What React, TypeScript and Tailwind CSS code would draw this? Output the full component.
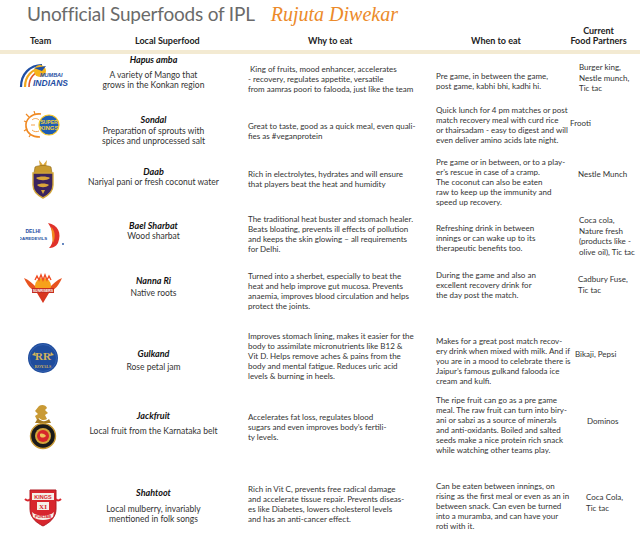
import React from "react";

type Row = {
  h: string;
  logo: React.ReactNode;
  logoPad: string;
  food: string;
  foodPad: string;
  descGap: string;
  desc: string[];
  whyPad: string;
  why: string[];
  whenPad: string;
  when: string[];
  partPad: string;
  part: string[];
};

const MiLogo = () => (
  <svg width="50" height="26" viewBox="0 0 50 26">
    <path d="M3 25 C3 12 12 3 24 3" stroke="#1f4fa3" strokeWidth="2.2" fill="none" />
    <path d="M7 25 C7 14 14 7 24 6" stroke="#f2a81d" strokeWidth="2.2" fill="none" />
    <path d="M11 25 C11 16 16 10 24 9" stroke="#e0582a" strokeWidth="1.6" fill="none" />
    <circle cx="22" cy="9" r="6" fill="#f6b51b" />
    <path d="M16 6 L28 4 L24 9 Z" fill="#1f4fa3" />
    <text x="22" y="15" fontSize="5.5" fontWeight="700" fontStyle="italic" fill="#1f4fa3" fontFamily="Liberation Sans">MUMBAI</text>
    <text x="15" y="23.5" fontSize="8.5" fontWeight="900" fontStyle="italic" fill="#1f4fa3" fontFamily="Liberation Sans">INDIANS</text>
  </svg>
);

const CskLogo = () => (
  <svg width="40" height="28" viewBox="0 0 40 28">
    <path d="M18 3 C8 2 2 9 3 16 C4 22 9 26 17 26" stroke="#f08a24" strokeWidth="1.6" fill="none" />
    <path d="M6 6 L3 3 M4 11 L1 10 M4 18 L1 20 M8 23 L6 26 M12 3 L11 0" stroke="#f08a24" strokeWidth="1.2" />
    <path d="M9 9 C11 7 14 7 16 9 M8 14 L12 14 M9 19 C11 21 14 21 16 20" stroke="#f4a24a" strokeWidth="1" fill="none" />
    <circle cx="26" cy="14" r="10" fill="#1d5cb4" stroke="#f4c62a" strokeWidth="1.2" />
    <text x="26" y="12.5" fontSize="5" fontWeight="700" fill="#f6d23a" textAnchor="middle" fontFamily="Liberation Sans">SUPER</text>
    <text x="26" y="19" fontSize="6" fontWeight="900" fill="#f6d23a" textAnchor="middle" fontFamily="Liberation Sans">KINGS</text>
  </svg>
);

const KkrLogo = () => (
  <svg width="28" height="40" viewBox="0 0 28 40">
    <path d="M10 1 L14 6 L18 1 L17 8 L11 8 Z" fill="#d9a63a" />
    <path d="M6 8 C9 6 19 6 22 8 L23 14 L5 14 Z" fill="#c99a2e" stroke="#8a6419" strokeWidth="0.6" />
    <path d="M4 14 L24 14 L24 26 C24 33 18 37 14 39 C10 37 4 33 4 26 Z" fill="#3b245e" stroke="#d4a83a" strokeWidth="1.4" />
    <path d="M7 19 C10 17 18 17 21 19 C18 22 10 22 7 19 Z" fill="#d9a63a" />
    <path d="M8 26 C11 24 17 24 20 26 C17 29 11 29 8 26 Z" fill="#d9a63a" />
    <path d="M12 31 L14 35 L16 31 Z" fill="#d9a63a" />
  </svg>
);

const DdLogo = () => (
  <svg width="46" height="28" viewBox="0 0 46 28">
    <text x="13" y="12" fontSize="5" fontWeight="700" fill="#1f4fa3" textAnchor="middle" fontFamily="Liberation Sans">DELHI</text>
    <text x="13" y="19" fontSize="4.4" fontWeight="700" fill="#1f4fa3" textAnchor="middle" fontFamily="Liberation Sans">DAREDEVILS</text>
    <path d="M28 2 C38 4 42 12 38 22 C36 26 32 27 29 27 C34 22 35 12 28 2 Z" fill="#e0322a" />
    <path d="M31 6 C35 9 36 16 33 22 C32 16 32 11 31 6 Z" fill="#f28a1e" />
    <circle cx="43" cy="23" r="0.9" fill="#1f4fa3" />
  </svg>
);

const SrhLogo = () => (
  <svg width="40" height="32" viewBox="0 0 40 32">
    <path d="M1 6 C6 8 10 12 14 16 L14 20 C8 18 4 13 1 6 Z" fill="#e8531f" />
    <path d="M39 6 C34 8 30 12 26 16 L26 20 C32 18 36 13 39 6 Z" fill="#e8531f" />
    <circle cx="20" cy="14" r="8" fill="#f7a11b" />
    <path d="M12 8 L14 4 L16 8 L18 3 L20 8 L22 3 L24 8 L26 4 L28 8" stroke="#f04d23" strokeWidth="1.4" fill="none" />
    <rect x="9" y="16" width="22" height="5" fill="#c62d1f" />
    <text x="20" y="20" fontSize="3.5" fontWeight="700" fill="#fff" textAnchor="middle" fontFamily="Liberation Sans">SUNRISERS</text>
    <path d="M14 21 L26 21 L20 31 Z" fill="#d8361f" />
  </svg>
);

const RrLogo = () => (
  <svg width="32" height="32" viewBox="0 0 32 32">
    <circle cx="16" cy="16" r="15" fill="#1f4c9c" />
    <circle cx="16" cy="16" r="13.5" fill="none" stroke="#3f6fbf" strokeWidth="0.6" />
    <text x="16" y="18" fontSize="11" fontWeight="700" fill="#d6b45a" textAnchor="middle" fontFamily="Liberation Serif">RR</text>
    <path d="M5 13 L8 10 L9 14 Z M27 13 L24 10 L23 14 Z" fill="#d6b45a" />
    <text x="16" y="25.5" fontSize="4" fontWeight="700" fill="#d6b45a" textAnchor="middle" fontFamily="Liberation Serif">ROYALS</text>
  </svg>
);

const RcbLogo = () => (
  <svg width="28" height="46" viewBox="0 0 28 46">
    <path d="M10 2 C13 0 17 1 18 4 L16 6 L19 9 L16 11 L18 15 C15 17 12 16 10 14 L8 16 L6 12 L9 10 L6 7 Z" fill="#c99a35" />
    <path d="M9 14 C12 18 17 18 20 15 L22 19 L6 19 Z" fill="#a57a22" />
    <circle cx="14" cy="32" r="12.5" fill="#1a1a1a" stroke="#c99a35" strokeWidth="1.4" />
    <circle cx="14" cy="32" r="8" fill="#d4a43a" />
    <circle cx="14" cy="32" r="6" fill="#d6262a" />
    <path d="M11 30 C13 29 16 30 17 32 C15 34 12 34 11 32 Z" fill="#f0c25a" />
  </svg>
);

const KxipLogo = () => (
  <svg width="38" height="40" viewBox="0 0 38 40">
    <path d="M6 3 L32 3 L32 22 C32 31 25 36 19 39 C13 36 6 31 6 22 Z" fill="#d7262d" stroke="#b01a22" strokeWidth="1" />
    <path d="M1 12 C3 14 5 14 6 12 M37 12 C35 14 33 14 32 12" stroke="#d7262d" strokeWidth="2" fill="none" />
    <rect x="8" y="6" width="22" height="7" fill="#f4f0e8" />
    <text x="19" y="11.6" fontSize="5.5" fontWeight="900" fill="#d7262d" textAnchor="middle" fontFamily="Liberation Sans">KINGS</text>
    <rect x="13" y="15" width="12" height="8" fill="#f4f0e8" />
    <text x="19" y="21.6" fontSize="7" fontWeight="900" fill="#d7262d" textAnchor="middle" fontFamily="Liberation Serif">XI</text>
    <path d="M8 25 C13 30 25 30 30 25 L29 30 C24 34 14 34 9 30 Z" fill="#f4f0e8" />
    <text x="19" y="31" fontSize="4" fontWeight="900" fill="#d7262d" textAnchor="middle" fontFamily="Liberation Sans">PUNJAB</text>
  </svg>
);

const rows: Row[] = [
  {
    h: "h-[49px]",
    logo: <MiLogo />,
    logoPad: "pt-[8px]",
    food: "Hapus amba",
    foodPad: "pt-[1px]",
    descGap: "mt-[5px]",
    desc: ["A variety of Mango that", "grows in the Konkan region"],
    whyPad: "pt-[10px]",
    why: ["\u00a0King of fruits, mood enhancer, accelerates", "- recovery, regulates appetite, versatile", "from aamras poori to falooda, just like the team"],
    whenPad: "pt-[17px]",
    when: ["Pre game, in between the game,", "post game, kabhi bhi, kadhi hi."],
    partPad: "pt-[8px] pl-[14px]",
    part: ["Burger king,", "Nestle munch,", "Tic tac"],
  },
  {
    h: "h-[51px]",
    logo: <CskLogo />,
    logoPad: "pt-[8px]",
    food: "Sondal",
    foodPad: "pt-[12px]",
    descGap: "mt-[1px]",
    desc: ["Preparation of sprouts with", "spices and unprocessed salt"],
    whyPad: "pt-[18px]",
    why: ["Great to taste, good as a quick meal, even quali-", "fies as #veganprotein"],
    whenPad: "pt-[2px]",
    when: ["Quick lunch for 4 pm matches or post", "match recovery meal with curd rice", "or thairsadam - easy to digest and will", "even deliver amino acids late night."],
    partPad: "pt-[15px] pl-[5px]",
    part: ["Frooti"],
  },
  {
    h: "h-[57px]",
    logo: <KkrLogo />,
    logoPad: "pt-[5px]",
    food: "Daab",
    foodPad: "pt-[13px]",
    descGap: "mt-[0px]",
    desc: ["Nariyal pani or fresh coconut water"],
    whyPad: "pt-[15px]",
    why: ["Rich in electrolytes, hydrates and will ensure", "that players beat the heat and humidity"],
    whenPad: "pt-[3px]",
    when: ["Pre game or in between, or to a play-", "er\u2019s rescue in case of a cramp.", "The coconut can also be eaten", "raw to keep up the immunity and", "speed up recovery."],
    partPad: "pt-[15px] pl-[13px]",
    part: ["Nestle Munch"],
  },
  {
    h: "h-[50px]",
    logo: <DdLogo />,
    logoPad: "pt-[10px]",
    food: "Bael Sharbat",
    foodPad: "pt-[10px]",
    descGap: "mt-[0px]",
    desc: ["Wood sharbat"],
    whyPad: "pt-[3px]",
    why: ["The traditional heat buster and stomach healer.", "Beats bloating, prevents ill effects of pollution", "and keeps the skin glowing \u2013 all requirements", "for Delhi."],
    whenPad: "pt-[12px]",
    when: ["Refreshing drink in between", "innings or can wake up to its", "therapeutic benefits too."],
    partPad: "pt-[4px] pl-[14px]",
    part: ["Coca cola,", "Nature fresh", "(products like -", "olive oil), Tic tac"],
  },
  {
    h: "h-[58px]",
    logo: <SrhLogo />,
    logoPad: "pt-[11px]",
    food: "Nanna Ri",
    foodPad: "pt-[15px]",
    descGap: "mt-[2px]",
    desc: ["Native roots"],
    whyPad: "pt-[10px]",
    why: ["Turned into a sherbet, especially to beat the", "heat and help improve gut mucosa. Prevents", "anaemia, improves blood circulation and helps", "protect the joints."],
    whenPad: "pt-[9px]",
    when: ["During the game and also an", "excellent recovery drink for", "the day post the match."],
    partPad: "pt-[13px] pl-[13px]",
    part: ["Cadbury Fuse,", "Tic tac"],
  },
  {
    h: "h-[72px]",
    logo: <RrLogo />,
    logoPad: "pt-[23px]",
    food: "Gulkand",
    foodPad: "pt-[30px]",
    descGap: "mt-[3px]",
    desc: ["Rose petal jam"],
    whyPad: "pt-[12px]",
    why: ["Improves stomach lining, makes it easier for the", "body to assimilate micronutrients like B12 &", "Vit D. Helps remove aches & pains from the", "body and mental fatigue. Reduces uric acid", "levels & burning in heels."],
    whenPad: "pt-[17px]",
    when: ["Makes for a great post match recov-", "ery drink when mixed with milk. And if", "you are in a mood to celebrate there is", "Jaipur\u2019s famous gulkand falooda ice", "cream and kulfi."],
    partPad: "pt-[30px] pl-[10px]",
    part: ["Bikaji, Pepsi"],
  },
  {
    h: "h-[78px]",
    logo: <RcbLogo />,
    logoPad: "pt-[13px]",
    food: "Jackfruit",
    foodPad: "pt-[20px]",
    descGap: "mt-[5px]",
    desc: ["Local fruit from the Karnataka belt"],
    whyPad: "pt-[21px]",
    why: ["Accelerates fat loss, regulates blood", "sugars and even improves body\u2019s fertili-", "ty levels."],
    whenPad: "pt-[4px]",
    when: ["The ripe fruit can go as a pre game", "meal. The raw fruit can turn into biry-", "ani or sabzi as a source of minerals", "and anti-oxidants. Boiled and salted", "seeds make a nice protein rich snack", "while watching other teams play."],
    partPad: "pt-[25px] pl-[22px]",
    part: ["Dominos"],
  },
  {
    h: "h-[63px]",
    logo: <KxipLogo />,
    logoPad: "pt-[18px]",
    food: "Shahtoot",
    foodPad: "pt-[19px]",
    descGap: "mt-[6px]",
    desc: ["Local mulberry, invariably", "mentioned in folk songs"],
    whyPad: "pt-[15px]",
    why: ["Rich in Vit C, prevents free radical damage", "and accelerate tissue repair. Prevents diseas-", "es like Diabetes, lowers cholesterol levels", "and has an anti-cancer effect."],
    whenPad: "pt-[12px]",
    when: ["Can be eaten between innings, on", "rising as the first meal or even as an in", "between snack. Can even be turned", "into a muramba, and can have your", "roti with it."],
    partPad: "pt-[23px] pl-[21px]",
    part: ["Coca Cola,", "Tic tac"],
  },
];

const Lines = ({ items }: { items: string[] }) => (
  <>
    {items.map((t, i) => (
      <div key={i} className="whitespace-nowrap">
        {t}
      </div>
    ))}
  </>
);

export default function App() {
  return (
    <div className="w-[640px] h-[533px] overflow-hidden bg-white font-['Lato',sans-serif] text-[#333]">
      {/* title */}
      <div className="flex items-start h-[30px] pl-[27px] pt-[2px]">
        <div className="text-[19px] leading-[24px] text-[#6a6a6a] tracking-[-0.2px]">Unofficial Superfoods of IPL</div>
        <div className="ml-[16px] pt-[1px] text-[20px] leading-[22px] italic text-[#ec8a2a] font-['Liberation_Serif',serif]">
          Rujuta Diwekar
        </div>
      </div>

      {/* column heads */}
      <div className="grid grid-cols-[85px_137px_214px_129px_75px] h-[20px] text-[9px] font-bold leading-[10px] text-[#222]">
        <div className="pl-[30px] pt-[6px]">Team</div>
        <div className="pl-[50px] pt-[6px]">Local Superfood</div>
        <div className="pl-[86px] pt-[6px]">Why to eat</div>
        <div className="pl-[35px] pt-[6px]">When to eat</div>
        <div className="text-center -mt-[4px] pr-[8px]">
          <div>Current</div>
          <div>Food Partners</div>
        </div>
      </div>
      <div className="h-[4px] bg-[#f3ead2]" />

      {/* rows */}
      {rows.map((r, i) => (
        <div key={i} className={`grid grid-cols-[85px_137px_214px_129px_75px] items-start ${r.h}`}>
          <div className={`flex justify-center ${r.logoPad}`}>{r.logo}</div>
          <div className={`text-center ${r.foodPad}`}>
            <div className="text-[9px] leading-[10px] font-bold italic text-[#111]">{r.food}</div>
            <div className={`text-[8.5px] leading-[10px] ${r.descGap}`}>
              <Lines items={r.desc} />
            </div>
          </div>
          <div className={`pl-[26px] text-[8px] leading-[10px] ${r.whyPad}`}>
            <Lines items={r.why} />
          </div>
          <div className={`text-[8px] leading-[10px] ${r.whenPad}`}>
            <Lines items={r.when} />
          </div>
          <div className={`text-[8px] leading-[10.5px] ${r.partPad}`}>
            <Lines items={r.part} />
          </div>
        </div>
      ))}
    </div>
  );
}
